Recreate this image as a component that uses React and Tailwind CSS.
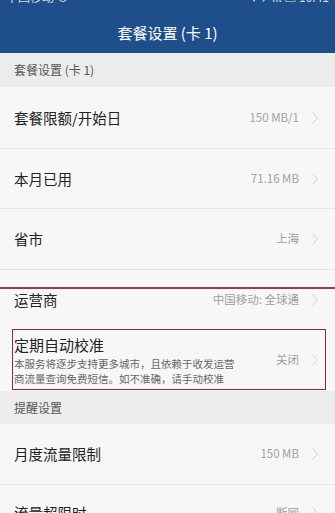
import React from 'react';

const font = { fontFamily: '"Noto Sans CJK SC", "Noto Sans", sans-serif' };

function Chevron() {
  return (
    <svg width="8" height="14" viewBox="0 0 8 14" className="flex-shrink-0">
      <path d="M1.5 1.5 L6.5 7 L1.5 12.5" fill="none" stroke="#cfcfcf" strokeWidth="1" />
    </svg>
  );
}

function Row({ label, value, h, divider = true }) {
  return (
    <div className={`flex items-center justify-between pl-[14px] pr-[16px] bg-[#f7f7f7] ${h} ${divider ? 'border-b border-[#e4e4e4]' : ''}`}>
      <span className="text-[14.5px] text-[#222]">{label}</span>
      <div className="flex items-center gap-[12px]">
        <span className="text-[11.5px] text-[#a0a0a0]">{value}</span>
        <Chevron />
      </div>
    </div>
  );
}

function Section({ title, h }) {
  return (
    <div className={`flex items-center pl-[14px] bg-[#ececec] ${h}`}>
      <span className="text-[12px] text-[#555]">{title}</span>
    </div>
  );
}

export default function App() {
  return (
    <div className="relative w-[335px] h-[513px] overflow-hidden bg-[#f7f7f7]" style={font}>
      {/* header */}
      <div className="bg-[#1f4f8b] h-[53px] flex flex-col">
        <div className="h-[3px] overflow-hidden flex items-end justify-between px-[6px]">
          <span className="text-[12px] leading-[12px] text-white/80">中国移动 ⊙</span>
          <span className="text-[12px] leading-[12px] text-white/80">▾ ✈ ııl ▣ 10:41</span>
        </div>
        <div className="flex-1 flex items-center justify-center pt-[10px]">
          <span className="text-[15px] text-white">套餐设置 (卡 1)</span>
        </div>
      </div>

      <Section title="套餐设置 (卡 1)" h="h-[34px]" />
      <Row label="套餐限额/开始日" value="150 MB/1" h="h-[62px]" />
      <Row label="本月已用" value="71.16 MB" h="h-[60px]" />
      <Row label="省市" value="上海" h="h-[61px]" />
      <Row label="运营商" value="中国移动: 全球通" h="h-[59px]" divider={false} />

      {/* periodic calibration */}
      <div className="flex items-center justify-between pl-[14px] pr-[16px] bg-[#f7f7f7] h-[62px]">
        <div className="flex flex-col">
          <span className="text-[15px] leading-[19px] text-[#222]">定期自动校准</span>
          <span className="text-[10.5px] leading-[15px] text-[#666] mt-[2px]">本服务将逐步支持更多城市，且依赖于收发运营</span>
          <span className="text-[10.5px] leading-[15px] text-[#666]">商流量查询免费短信。如不准确，请手动校准</span>
        </div>
        <div className="flex items-center gap-[12px]">
          <span className="text-[11.5px] text-[#a0a0a0]">关闭</span>
          <Chevron />
        </div>
      </div>

      <Section title="提醒设置" h="h-[33px]" />
      <Row label="月度流量限制" value="150 MB" h="h-[61px]" />
      <Row label="流量超限时" value="断网" h="h-[56px]" divider={false} />

      {/* annotation overlays */}
      <div className="absolute left-0 right-0 top-[287px] h-[1.5px] bg-[#a3364a]" />
      <div className="absolute left-[12px] top-[329px] w-[314px] h-[61px] border-[1.5px] border-[#8e2a3e]" />
    </div>
  );
}
